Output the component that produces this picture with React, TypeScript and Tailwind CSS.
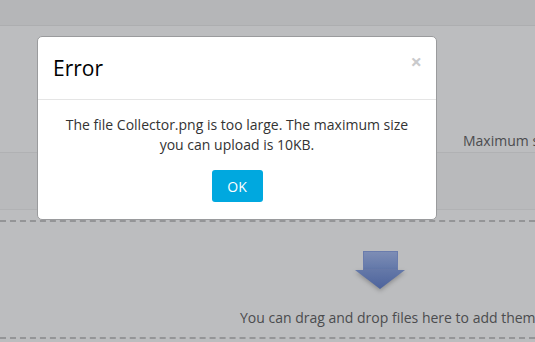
const App = () => {
    return (
        <div className="relative w-[535px] h-[342px] overflow-hidden bg-[#bcbdbf] font-['Open_Sans',sans-serif] text-[#4b4c4e]">
            {/* page behind the backdrop */}
            <div className="h-[26px] bg-[#b5b6b8] border-b border-[#adaeb0]" />
            <div className="h-[127px] border-b border-[#b0b1b3] flex items-end pb-[1px]">
                <span className="ml-[463px] whitespace-nowrap text-[14px] leading-[20px]">Maximum size for new files: 10KB</span>
            </div>
            <div className="h-[57px] bg-[#b9babc] border-b border-[#b1b2b4]" />
            <div className="mt-[10px] h-[119px] border-y-2 border-dashed border-[#949597] flex flex-col">
                <div className="ml-[355px] mt-[29px] flex flex-col items-center w-[50px]">
                    <div className="w-[35px] h-[19px] bg-gradient-to-b from-[#7d8db5] to-[#6378a9] border border-[#6a7cad]" />
                    <svg width="50" height="19" viewBox="0 0 50 19" className="drop-shadow-[0_2px_2px_rgba(0,0,0,0.25)]">
                        <defs>
                            <linearGradient id="ah" x1="0" y1="0" x2="0" y2="1">
                                <stop offset="0" stopColor="#6478a8" />
                                <stop offset="1" stopColor="#4d639c" />
                            </linearGradient>
                        </defs>
                        <polygon points="0,0 50,0 25,19" fill="url(#ah)" />
                    </svg>
                </div>
                <p className="ml-[240px] mt-[19px] whitespace-nowrap text-[14px] leading-[20px]">
                    You can drag and drop files here to add them.
                </p>
            </div>

            {/* modal */}
            <div className="absolute left-[37px] top-[36px] w-[400px] h-[184px] bg-white border border-[#9a9b9d] rounded-[5px] flex flex-col">
                <div className="h-[63px] border-b border-[#e5e5e5] flex items-center justify-between pl-[15px] pr-[14px]">
                    <h1 className="text-[21px] text-black leading-none mt-[1px]">Error</h1>
                    <span className="text-[20px] font-bold text-[#c9cacc] leading-none -mt-[13px]">×</span>
                </div>
                <div className="flex flex-col items-center px-[15px] pt-[15px]">
                    <p className="text-center text-[14px] leading-[20px] text-[#333]">
                        The file Collector.png is too large. The maximum size you can upload is 10KB.
                    </p>
                    <button className="mt-[15px] w-[51px] h-[32px] bg-[#00a8df] rounded-[3px] text-white text-[14px]">
                        OK
                    </button>
                </div>
            </div>
        </div>
    )
}

export default App;
